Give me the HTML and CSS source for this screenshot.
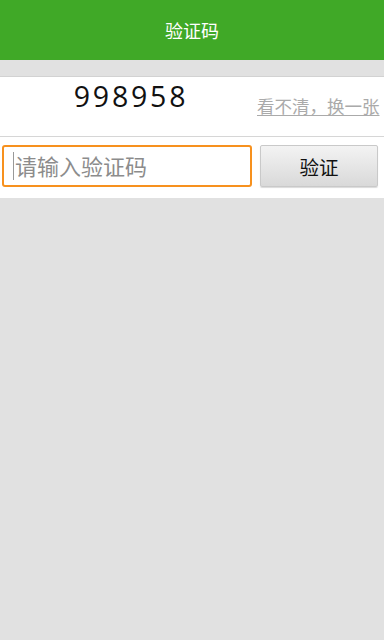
FILE: index.html
```html
<!DOCTYPE html>
<html>
<head>
<meta charset="utf-8">
<link rel="stylesheet" href="styles.css">
</head>
<body>
<header class="bar">验证码</header>
<div class="gap"></div>
<section class="captcha-row">
  <div class="code">998958</div>
  <a class="refresh">看不清，换一张</a>
</section>
<section class="input-row">
  <div class="field"><span class="caret"></span><span class="ph">请输入验证码</span></div>
  <button class="btn">验证</button>
</section>
</body>
</html>
```
FILE: styles.css
```css
html, body {
  margin: 0;
  padding: 0;
  width: 384px;
  height: 640px;
  background: #e1e1e1;
  font-family: "Noto Sans CJK SC", "Open Sans", sans-serif;
  overflow: hidden;
}
.bar {
  height: 60px;
  background: #40a927;
  color: #fff;
  font-size: 18px;
  display: flex;
  align-items: center;
  justify-content: center;
}
.gap {
  height: 16px;
  background: #e1e1e1;
}
.captcha-row {
  height: 59px;
  background: #fff;
  border-top: 1px solid #d2d2d2;
  border-bottom: 1px solid #d6d6d6;
  display: flex;
  position: relative;
}
.code {
  width: 262px;
  text-align: center;
  font-family: "Open Sans", sans-serif;
  font-weight: 500;
  font-size: 28.5px;
  letter-spacing: 2.8px;
  color: #111;
  line-height: 38px;
}
.refresh {
  position: absolute;
  left: 257px;
  top: 16px;
  font-size: 17.5px;
  color: #aaa;
  text-decoration: underline;
  text-underline-offset: 2px;
  white-space: nowrap;
}
.input-row {
  height: 61px;
  background: #fff;
  display: flex;
  align-items: flex-start;
  padding: 8px 6px 0 2px;
  box-sizing: border-box;
  gap: 8px;
}
.field {
  box-sizing: border-box;
  width: 250px;
  height: 42px;
  border: 2px solid #f7911e;
  border-radius: 3px;
  display: flex;
  align-items: center;
  padding-left: 9px;
  position: relative;
}
.caret {
  width: 1px;
  height: 28px;
  background: #999;
  position: absolute;
  left: 9px;
  top: 5px;
}
.ph {
  font-size: 22px;
  color: #8c8c8c;
  margin-left: 2px;
  margin-top: -3px;
}
.btn {
  box-sizing: border-box;
  width: 118px;
  height: 42px;
  border: 1px solid #c9c9c9;
  border-radius: 2px;
  background: linear-gradient(#f3f3f3, #d9d9d9);
  box-shadow: 0 1px 1px rgba(0,0,0,0.15);
  font-family: "Noto Sans CJK SC", sans-serif;
  font-size: 19.5px;
  color: #111;
  padding: 0;
}
```
